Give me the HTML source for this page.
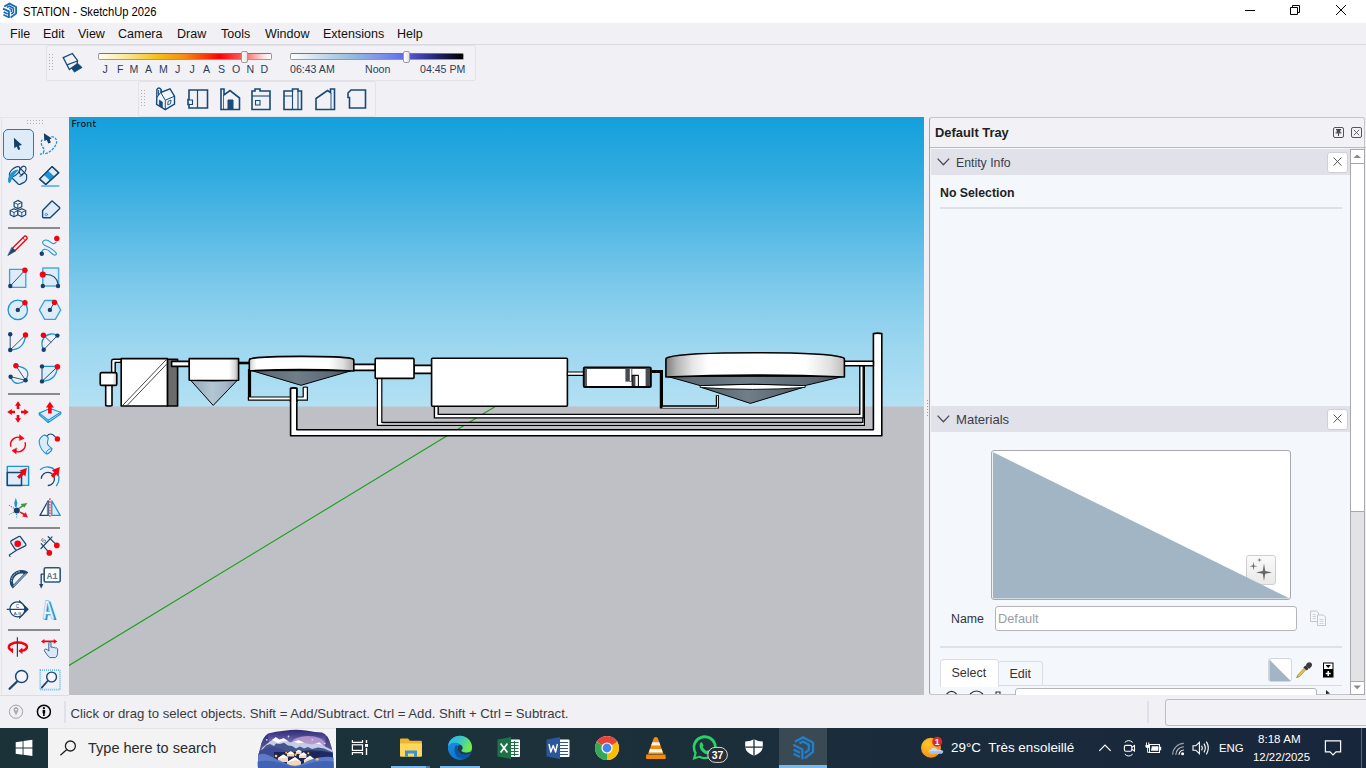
<!DOCTYPE html>
<html><head><meta charset="utf-8"><title>STATION - SketchUp 2026</title>
<style>
*{box-sizing:border-box;margin:0;padding:0}
html,body{width:1366px;height:768px;overflow:hidden;background:#f0f0f5;font-family:"Liberation Sans","DejaVu Sans",sans-serif;font-size:13px;color:#000}
.abs,.abs>*{position:absolute}
svg{position:absolute;overflow:visible}
#title{left:0;top:0;width:1366px;height:23px;background:#fff}
#title .t{left:23px;top:4px;font-size:12.8px;color:#000;white-space:nowrap;line-height:16px;transform:scaleX(0.876);transform-origin:0 0}
#menu{left:0;top:23px;width:1366px;height:21px;background:#f0f0f5}
#menu span{top:3px;font-size:12.5px;white-space:nowrap;line-height:16px;color:#111}
#tb{left:0;top:44px;width:1366px;height:73px;background:#f0f0f5;border-top:1px solid #dadae0}
.tbox{border:1px solid #e2e2e8;border-radius:2px;background:#f1f1f6}
.grip{width:5px;background-image:radial-gradient(circle,#b8b8c0 0.6px,transparent 0.9px);background-size:3px 3px}
.lbl{font-size:10.6px;color:#2f3c58;line-height:12px;white-space:nowrap}
#vp{left:69px;top:117px;width:855px;height:579px;overflow:hidden;background:#bfc0c6}
#sky{left:0;top:0;width:855px;height:290px;border-bottom:1px solid #b9cfdc;background:linear-gradient(#14a0dc 0%,#30abdf 20%,#58bae5 40%,#7fcaeb 60%,#9dd7f0 80%,#b3e0f3 100%)}
#lt{left:0;top:117px;width:69px;height:578px;background:#f0f0f5}
#tray{left:929px;top:117px;width:436px;height:578px;background:#f1f1f6;border:1px solid #c4c4ca;border-left-color:#a4a4aa;border-radius:3px}
.phead{background:#e1e1e9;height:26px}
.phead span{left:25px;top:6px;font-size:12.3px;color:#3c3c48;line-height:16px;white-space:nowrap}
.xbtn{width:21px;height:21px;background:#fff;border:1px solid #cfcfd6;border-radius:3px}
#status{left:0;top:695px;width:1366px;height:33px;background:#f0f0f5}
#taskbar{left:0;top:728px;width:1366px;height:40px;background:linear-gradient(90deg,#1b3239 0%,#1c313a 40%,#1a2c3b 65%,#18263c 100%);color:#fff}
</style></head><body>
<!-- TITLE BAR -->
<div id="title" class="abs">
<svg style="left:0;top:0" width="22" height="23" viewBox="0 0 22 23" fill="none" stroke="#1a6db0" stroke-width="1.800" stroke-linejoin="miter">
<path d="M4.200 6.500 L9.500 3.600 L16.100 7 L16.100 13.500 L10.600 17.500"/>
<path d="M6.800 7.300 L9.500 6.200 L13.400 8.300 L13.400 12.300 L11.200 14" stroke-width="1.600"/>
<path d="M9.300 8.300 L11.300 9.500 L11.300 12" stroke-width="1.400"/>
<path d="M3 8.600 L8.900 11.400 L8.900 18" stroke-width="1.900"/>
<path d="M3.600 12 L7.700 14" stroke-width="1.700"/>
<path d="M3.400 14.700 L8.200 17" stroke-width="1.700"/>
</svg>
<span class="t">STATION - SketchUp 2026</span>
<svg style="left:1226px;top:0" width="140" height="23" viewBox="1226 0 140 23" fill="none" stroke="#000" stroke-width="1">
<path d="M1245 10.5 H1255"/>
<path d="M1290.5 7.5 H1297.5 V14.5 H1290.5 Z"/><path d="M1292.5 7.5 V5.5 H1299.5 V12.5 H1297.5"/>
<path d="M1336 5 L1346 15 M1346 5 L1336 15"/>
</svg>
</div>
<!-- MENU -->
<div id="menu" class="abs">
<span style="left:10px">File</span><span style="left:43px">Edit</span><span style="left:78px">View</span><span style="left:118px">Camera</span><span style="left:177px">Draw</span><span style="left:221px">Tools</span><span style="left:265px">Window</span><span style="left:323px">Extensions</span><span style="left:397px">Help</span>
</div>
<!-- TOOLBARS -->
<div id="tb" class="abs"></div>
<div class="abs tbox" style="left:46px;top:45px;width:430px;height:36px"></div>
<div class="abs tbox" style="left:138px;top:81px;width:238px;height:36px"></div>
<div class="abs" style="left:98px;top:53px;width:174px;height:7px;border:1px solid #9a9a9a;border-top-color:#777;border-radius:2px;background:linear-gradient(90deg,#fffef0 0%,#fbe7a0 15%,#f5c21c 33%,#f58a10 50%,#f83a08 62%,#fe0000 70%,#fb6a6a 85%,#fde4e4 96%,#fff 100%)"></div>
<div class="abs" style="left:241px;top:51px;width:7px;height:12px;border:1px solid #9c9c9c;border-radius:2px;background:linear-gradient(90deg,#fff,#e4e4e4)"></div>
<div class="abs" style="left:290px;top:53px;width:174px;height:7px;border:1px solid #9a9a9a;border-top-color:#777;border-radius:2px;background:linear-gradient(90deg,#fff 0%,#cfe0ee 15%,#9cc0de 33%,#7f98e8 50%,#6a78f2 62%,#4a4cc0 72%,#23236e 85%,#0a0a20 95%,#000 100%)"></div>
<div class="abs" style="left:403px;top:51px;width:7px;height:12px;border:1px solid #9c9c9c;border-radius:2px;background:linear-gradient(90deg,#fff,#e4e4e4)"></div>
<div class="abs" id="months">
<span class="lbl" style="left:102.5px;top:63px">J</span><span class="lbl" style="left:117px;top:63px">F</span><span class="lbl" style="left:129.5px;top:63px">M</span><span class="lbl" style="left:145px;top:63px">A</span><span class="lbl" style="left:159px;top:63px">M</span><span class="lbl" style="left:175px;top:63px">J</span><span class="lbl" style="left:189.5px;top:63px">J</span><span class="lbl" style="left:203px;top:63px">A</span><span class="lbl" style="left:218px;top:63px">S</span><span class="lbl" style="left:232px;top:63px">O</span><span class="lbl" style="left:246.5px;top:63px">N</span><span class="lbl" style="left:260.5px;top:63px">D</span>
<span class="lbl" style="left:290px;top:63px">06:43 AM</span><span class="lbl" style="left:365px;top:63px">Noon</span><span class="lbl" style="left:420px;top:63px">04:45 PM</span>
</div>
<svg style="left:0;top:44px" width="480" height="73" viewBox="0 44 480 73" fill="none" stroke="#174a7a" stroke-width="1.6" stroke-linejoin="miter">
<g fill="#b0b0b4" stroke="none"><rect x="49" y="54" width="1" height="1"/><rect x="49" y="57" width="1" height="1"/><rect x="49" y="60" width="1" height="1"/><rect x="49" y="63" width="1" height="1"/><rect x="49" y="66" width="1" height="1"/><rect x="49" y="69" width="1" height="1"/><rect x="52" y="54" width="1" height="1"/><rect x="52" y="57" width="1" height="1"/><rect x="52" y="60" width="1" height="1"/><rect x="52" y="63" width="1" height="1"/><rect x="52" y="66" width="1" height="1"/><rect x="52" y="69" width="1" height="1"/><rect x="141" y="90" width="1" height="1"/><rect x="141" y="93" width="1" height="1"/><rect x="141" y="96" width="1" height="1"/><rect x="141" y="99" width="1" height="1"/><rect x="141" y="102" width="1" height="1"/><rect x="141" y="105" width="1" height="1"/><rect x="144" y="90" width="1" height="1"/><rect x="144" y="93" width="1" height="1"/><rect x="144" y="96" width="1" height="1"/><rect x="144" y="99" width="1" height="1"/><rect x="144" y="102" width="1" height="1"/><rect x="144" y="105" width="1" height="1"/></g>
<!-- shadow icon -->
<g stroke-width="1.3"><path d="M71.5 68.1 L77.4 63.2 L82.1 67.5 L74.4 72.1 Z" fill="#0f4775" stroke="#0f4775" stroke-width="0.8"/><path d="M63.2 57.6 L72.4 53.5 L77.6 60.7 L77 64 L69.4 69.5 Z" fill="#f1f1f6"/><path d="M67 64.8 L77.4 61"/></g>
<!-- iso house -->
<g stroke-width="1.4"><path d="M156.8 97.3 L156.6 104.4 L165.3 109.6 L174.5 104 L174.5 96.2 L170 88.9 L161.4 92.2 L161 89.4 Q158.9 86.6 156.9 89.4 Z" fill="#f3f5fa"/><path d="M165.3 109.6 L165.3 100.2 L160.6 92.4 L157 97.4 M165.3 100.2 L174.5 96.2 M161 89.4 V92.6 M158.6 90 V95" stroke-width="1"/><path d="M159.400 100.200 L162.300 101.900 L162.300 107.400 L159.400 105.600 Z" fill="#174a7a" stroke-width="0.800"/><path d="M168 101.400 L171 100 L170.600 103.600 L167.800 105 Z" stroke-width="0.900"/></g>
<!-- top -->
<path d="M189 90 H207.5 V108 H189 V104.5 H188 V99.5 H189 Z"/><path d="M197.5 90 V108" stroke-width="1.2"/><path d="M189 100 H192.5 V104.5 H189" stroke-width="1.1"/>
<!-- front -->
<path d="M221 109.5 V89 H224 V95 L230 90.5 L239.5 98 V109.5 Z"/><path d="M228 109.5 V100 H233 V109.5 Z" fill="#1b4b7a" stroke-width="1"/><path d="M223.5 95 V109" stroke-width="0.8"/>
<!-- right -->
<path d="M252 109.5 V91 H255 V89 H260 V91 H270 V109.5 Z"/><path d="M252 96 H270" stroke-width="1.1"/><path d="M255.5 100.5 H260 V105 H255.5 Z" stroke-width="1.1"/>
<!-- back -->
<path d="M284 109.5 V91 H292.5 V89 H298 V91 H301.5 V109.5 Z"/><path d="M284 96 H292.5 M292.5 91 V109.5 M298 91 V109.5" stroke-width="1.1"/>
<!-- left -->
<path d="M316 109.5 V98.5 L327.5 90.5 L330.5 92.5 V89 H334.5 V109.5 Z"/><path d="M331 93 V109.5" stroke-width="0.9"/>
<!-- bottom -->
<path d="M348 93 L351 90 H365.5 V108 H349.5 V97.5 H348 Z"/>
</svg>
<!-- LEFT TOOLBAR -->
<div id="lt" class="abs"></div>
<svg style="left:0;top:117px" width="69" height="578" viewBox="0 117 69 578" fill="none" stroke-linecap="round" stroke-linejoin="round">
<g fill="#b0b0b4" stroke="none"><rect x="27" y="120" width="1" height="1"/><rect x="27" y="123" width="1" height="1"/><rect x="30" y="120" width="1" height="1"/><rect x="30" y="123" width="1" height="1"/><rect x="33" y="120" width="1" height="1"/><rect x="33" y="123" width="1" height="1"/><rect x="36" y="120" width="1" height="1"/><rect x="36" y="123" width="1" height="1"/><rect x="39" y="120" width="1" height="1"/><rect x="39" y="123" width="1" height="1"/><rect x="42" y="120" width="1" height="1"/><rect x="42" y="123" width="1" height="1"/></g>
<path d="M0 117.500 H69 M1.500 118 V695" stroke="#e4e4ec" stroke-width="1"/>
<!-- separators -->
<g stroke="#8a8a8a" stroke-width="2" stroke-linecap="butt"><path d="M8 228 H60"/><path d="M8 394 H60"/><path d="M8 528 H60"/><path d="M8 630 H60"/></g>
<!-- select -->
<rect x="3.5" y="129.5" width="30" height="30" rx="4.5" fill="#deebf8" stroke="#217cc2" stroke-width="1"/>
<path d="M13.900 137.700 L14.300 148.200 L16.700 146.500 L18.200 150.100 L20.300 149.200 L18.900 145.700 L22 145 Z" fill="#153e6a"/>
<!-- lasso -->
<path d="M51.400 136.600 C55 136.600 57 139.600 56.600 142.500 C56 146.500 51 151.500 47 153.200 C45.500 153.800 44 153.800 43.400 153.300 M42.300 139.600 C40.600 141.500 41 145 43 147.500 C44.600 149.600 44.200 152 42.600 153 C41.800 153.700 40.800 154.200 39.900 154.400" stroke="#1c95d8" stroke-width="1.300" stroke-dasharray="2.600 1.200" stroke-linecap="butt"/>
<path d="M43.900 133.200 L44.300 141 L46.900 140.100 L48.200 143.600 L50.900 142.600 L49.700 139.400 L51.600 138.300 Z" fill="#153e6a"/>
<!-- paint bucket -->
<path d="M19.100 167.200 L26.600 174.900 L26.600 178.900 Q26.400 181 24 182.400 L20 184.400 Q19 184.700 18.200 184 L11 177 Z" fill="#deebf8" stroke="#1b4670" stroke-width="1.200"/>
<ellipse cx="14.600" cy="171.800" rx="6.700" ry="3.300" transform="rotate(-44 14.600 171.800)" fill="#f4f8fd" stroke="#1b4670" stroke-width="1.200"/>
<path d="M17.800 169.400 C13.600 169.600 9.600 173 8.400 177.600 C7.600 180.400 8 183 9.400 183.200 C10.800 183 11.200 180.800 12.200 178.600 C13.600 175.400 16.200 172.400 18.400 170.200 Z" fill="#1c95d8"/>
<ellipse cx="22.700" cy="170.400" rx="2.700" ry="4.500" transform="rotate(28 22.700 170.400)" stroke="#1b4670" stroke-width="1.100"/>
<path d="M19.800 176.300 Q22.400 175.800 22.900 173.400" stroke="#1b4670" stroke-width="1.100"/>
<!-- eraser -->
<path d="M39.5 179.1 L52 166.6 L58.7 172.7 L45.8 184.5 Z" fill="#deebf8" stroke="#1b4670" stroke-width="1.3"/>
<path d="M43.9 174.9 L48 170.8 L54.5 176.6 L50.1 180.6 Z" fill="#1c95d8"/>
<path d="M39.5 179.1 L52 166.6 L58.7 172.7 L45.8 184.5 Z" stroke="#1b4670" stroke-width="1.3"/>
<path d="M41.2 186 H59.4" stroke="#6cc0ea" stroke-width="2" stroke-linecap="butt"/>
<!-- components -->
<g stroke="#1b4670" stroke-width="1.2" fill="#f1f5fb">
<path d="M17.8 200.4 L21.8 202.5 L21.8 206.7 L17.8 208.6 L14.1 206.7 L14.1 202.5 Z"/><path d="M14.1 202.5 L17.8 204.4 L21.8 202.5 M17.8 204.4 V208.6" stroke-width="0.9"/>
<path d="M14 208.7 L17.9 210.6 L17.9 214.7 L14 216.7 L10.2 214.7 L10.2 210.6 Z"/><path d="M10.2 210.6 L14 212.5 L17.9 210.6 M14 212.5 V216.7" stroke-width="0.9"/>
<path d="M21.8 208.7 L25.7 210.6 L25.7 214.7 L21.8 216.7 L17.9 214.7 L17.9 210.6 Z"/><path d="M17.9 210.6 L21.8 212.5 L25.7 210.6 M21.8 212.5 V216.7" stroke-width="0.9"/>
</g>
<!-- tag -->
<path d="M42.6 210.6 L51.6 201.3 Q52.2 200.8 52.8 201.4 L59.6 207.6 Q60 208.2 59.5 208.8 L50.2 217.8 L43.6 217.8 Q42.6 217.7 42.6 216.8 Z" fill="#deebf8" stroke="#1b4670" stroke-width="1.4"/>
<circle cx="46.3" cy="214.5" r="1.2" stroke="#1c95d8" stroke-width="0.9"/>
<!-- pencil -->
<path d="M12.4 248.3 L24.5 236.2 Q25.6 235.6 26.4 236.6 L27 237.4 Q27.6 238.2 26.8 239 L14.9 250.7 Z" fill="#fff" stroke="#f8000f" stroke-width="1.4"/>
<path d="M22.8 238 L25.2 240.5" stroke="#f8000f" stroke-width="1"/>
<path d="M12 247.9 L15.3 251.1 L8.2 255.3 Z" fill="#1b4670" stroke="#1b4670" stroke-width="0.8"/>
<!-- freehand -->
<path d="M56.2 242.2 C54.5 244 52.5 244 50.5 242.2 C48 240 45.5 239.6 43.8 240.6 C42 241.8 42.3 244.2 44.6 245.2 C47.5 246.4 50 247.6 52.6 249.6 C55.6 251.8 57 253.4 56 254.6 C54.8 255.8 52.8 254.6 51 252.6 C49 250.4 46.6 249 44.4 249.3 C42.8 249.6 42 250.6 41.8 252" stroke="#1c95d8" stroke-width="1.1"/>
<circle cx="56.8" cy="238.5" r="2.7" fill="#f8000f"/><circle cx="41.8" cy="253.7" r="2.2" fill="#173f6b"/>
<!-- rectangle -->
<rect x="9.6" y="269.4" width="16.2" height="18" fill="#deebf8" stroke="#35a2dd" stroke-width="1.3"/>
<path d="M10.3 286 L24.9 270.3" stroke="#1b4670" stroke-width="0.9"/>
<circle cx="24.9" cy="270.3" r="2.7" fill="#f8000f"/><circle cx="10.3" cy="286" r="2.2" fill="#173f6b"/>
<!-- rotated rect -->
<rect x="42.8" y="267.9" width="15.8" height="18.2" fill="#deebf8" stroke="#49ade2" stroke-width="1.5"/>
<path d="M45.5 274.5 Q56.5 274.5 58 284" stroke="#1b4670" stroke-width="1.1"/>
<circle cx="42.8" cy="274.5" r="3.1" fill="#f8000f"/><circle cx="42.8" cy="286" r="2.2" fill="#173f6b"/><circle cx="58" cy="286" r="2.2" fill="#173f6b"/>
<!-- circle -->
<circle cx="17.8" cy="309.9" r="9.7" fill="#deebf8" stroke="#1c95d8" stroke-width="1.3"/>
<path d="M17.8 309.9 L24.9 302.8" stroke="#1b4670" stroke-width="0.9"/>
<circle cx="17.8" cy="309.9" r="2.2" fill="#173f6b"/><circle cx="24.9" cy="302.8" r="2.7" fill="#f8000f"/>
<!-- polygon -->
<path d="M39.4 309.9 L44.7 300.5 L55.3 300.5 L60.7 309.9 L55.3 319.4 L44.7 319.4 Z" fill="#deebf8" stroke="#35a2dd" stroke-width="1.3"/>
<path d="M49.9 309.9 L54.5 302.4" stroke="#1b4670" stroke-width="0.9"/>
<circle cx="49.9" cy="309.9" r="2.2" fill="#173f6b"/><circle cx="54.5" cy="302.4" r="2.7" fill="#f8000f"/>
<!-- arc -->
<path d="M10.2 350 Q24.5 349.5 25.5 335" stroke="#1c95d8" stroke-width="1.3"/>
<path d="M10.2 334.3 V350 L25.5 335" stroke="#1b4670" stroke-width="0.9"/>
<circle cx="10.2" cy="334.3" r="2.2" fill="#173f6b"/><circle cx="10.2" cy="350" r="2.2" fill="#173f6b"/><circle cx="25.5" cy="335" r="2.7" fill="#f8000f"/>
<!-- 2pt arc -->
<path d="M43.7 349.7 A10 10 0 0 1 57.4 335.6" stroke="#1c95d8" stroke-width="1.3"/>
<path d="M43.7 349.7 L57.4 335.6 M43.4 335.2 L51 342.3" stroke="#1b4670" stroke-width="0.9"/>
<circle cx="43.4" cy="335.2" r="2.7" fill="#f8000f"/><circle cx="57.4" cy="335.6" r="2.2" fill="#173f6b"/><circle cx="43.7" cy="349.7" r="2.2" fill="#173f6b"/>
<!-- 3pt arc -->
<path d="M15.9 365.8 Q33 368 25.6 380.3 M10.6 376.7 Q15 388 25.6 380.3" stroke="#1c95d8" stroke-width="1.3"/>
<path d="M15.9 365.8 L25.6 380.3 L10.6 376.7" stroke="#1b4670" stroke-width="0.9"/>
<circle cx="15.9" cy="365.8" r="2.7" fill="#f8000f"/><circle cx="10.6" cy="376.7" r="2.2" fill="#173f6b"/><circle cx="25.6" cy="380.3" r="2.2" fill="#173f6b"/>
<!-- pie -->
<path d="M42 366.4 H57.4 Q56.5 380.5 42 381.4 Z" fill="#deebf8"/>
<path d="M42 366.4 H57.4 M57.4 366.8 Q56.5 380.5 42 381.4" stroke="#1c95d8" stroke-width="1.3"/>
<path d="M42 366.4 V381.4 L57.4 366.8" stroke="#1b4670" stroke-width="1"/>
<circle cx="42" cy="366.4" r="2.2" fill="#173f6b"/><circle cx="42" cy="381.4" r="2.2" fill="#173f6b"/><circle cx="57.4" cy="366.8" r="2.8" fill="#f8000f"/>
<!-- move -->
<g fill="#f8000f" stroke="none">
<path d="M18 401.2 L21 405.8 H19.3 V409 H16.7 V405.8 H15 Z"/><path d="M18 422.8 L21 418.2 H19.3 V415 H16.7 V418.2 H15 Z"/>
<path d="M7.2 412 L11.8 409 V410.7 H15 V413.3 H11.8 V415 Z"/><path d="M28.8 412 L24.2 409 V410.7 H21 V413.3 H24.2 V415 Z"/>
</g>
<!-- push pull -->
<path d="M39.3 413.1 L49.9 408.5 L60.7 412.2 L60.7 413.9 L48.2 422.5 L39.3 414.8 Z" fill="#deebf8" stroke="#1c95d8" stroke-width="1.2"/>
<path d="M39.3 413.1 L48.2 420.3 L60.7 412.2 M48.2 420.3 V422.5" stroke="#1c95d8" stroke-width="1.1"/>
<path d="M49.9 401.8 L53.9 407.4 H51.7 V413.4 H48.1 V407.4 H45.9 Z" fill="#f8000f"/>
<!-- rotate -->
<path d="M10.8 446.2 A7.4 7.4 0 0 1 21 437.8 M25.2 442.8 A7.4 7.4 0 0 1 15 451.2" stroke="#f8000f" stroke-width="1.4"/>
<path d="M19.8 435 L24.2 438.4 L19.6 440.3 Z M16.4 448.3 L12 450.6 L15.9 453.6 Z" fill="#f8000f" stroke="#f8000f" stroke-width="0.6"/>
<!-- follow me -->
<path d="M47 436 Q50.5 431.5 55.3 436.8" stroke="#1b4670" stroke-width="1.1"/>
<path d="M43.7 435.2 C40.5 437 38.8 440 39.3 443 C40 447.5 43 451.5 46.2 453.9 C48 454.2 51.5 451.5 52 448.5 C49 446.5 47 444.5 47.4 442.7 C47.6 441 48 439.5 48.3 438.1 C47.5 436.3 45.5 435 43.7 435.2 Z" fill="#deebf8" stroke="#1c95d8" stroke-width="1.1"/>
<ellipse cx="49" cy="451.2" rx="3.4" ry="1.6" transform="rotate(-40 49 451.2)" stroke="#1c95d8" stroke-width="0.9"/>
<circle cx="57.4" cy="438.9" r="2.7" fill="#f8000f"/>
<!-- scale -->
<rect x="7.3" y="466.4" width="21.3" height="19" fill="#deebf8" stroke="#1c95d8" stroke-width="1.4"/>
<path d="M7.3 472.6 H21.5 V485.4 H7.3 Z" stroke="#1b4670" stroke-width="1.5"/>
<path d="M26.8 467.9 L19.6 470.6 L21.8 472.6 L17 476.6 L19.3 479 L23.6 474.6 L25.4 476.6 Z" fill="#f8000f"/>
<!-- offset -->
<path d="M40.4 469.4 A11.5 11.5 0 0 1 56.5 485.6" stroke="#1c95d8" stroke-width="1.3"/>
<path d="M41.3 478.3 A6.6 6.6 0 1 1 48.3 485.5" stroke="#1b4670" stroke-width="1.3"/>
<path d="M59.9 467.1 L51.8 470.2 L54.2 472.3 L50.8 475.6 L53.2 478 L56.4 474.6 L58.2 476.4 Z" fill="#f8000f"/>
<!-- axes -->
<path d="M15.8 497.8 L17.4 503 L16.6 507 H15 L14.2 503 Z" fill="#1c95d8"/>
<path d="M27.4 502.9 L24.4 507.6 L23 506.4 L19.5 509 L18.6 508 L21.8 505.2 L20.6 504 Z" fill="#3c9a3c"/>
<path d="M27.8 517.5 L22.2 516.4 L23.4 515 L19.5 512.6 L20.4 511.6 L24.6 513.6 L25.8 512.2 Z" fill="#f01020"/>
<path d="M13.8 508.2 L9 505.2" stroke="#f01020" stroke-width="1.1" stroke-dasharray="1 1.4" stroke-linecap="butt"/>
<path d="M13.6 512.2 L9 514.8" stroke="#3c9a3c" stroke-width="1.1" stroke-dasharray="1 1.4" stroke-linecap="butt"/>
<path d="M16.6 514 V518.6" stroke="#1c95d8" stroke-width="1.1" stroke-dasharray="1 1.4" stroke-linecap="butt"/>
<circle cx="16.8" cy="510.4" r="3" fill="#173f6b"/>
<!-- flip -->
<path d="M40 515.4 L48.2 500.8 V515.4 Z" fill="#fff" stroke="#1b4670" stroke-width="1.3"/>
<path d="M47.6 502 V515" stroke="#6d8aa8" stroke-width="1.6" stroke-linecap="butt"/>
<path d="M51.8 500.8 L60.2 515.4 H51.8 Z" fill="#deebf8" stroke="#1c95d8" stroke-width="1.3"/>
<path d="M49.9 498.2 V516.8" stroke="#ff6068" stroke-width="1.8" stroke-dasharray="2 0.8" stroke-linecap="butt"/>
<!-- tape -->
<path d="M16.2 550.4 L9.3 555 L10 556.4" stroke="#1b4670" stroke-width="1.2"/>
<path d="M11.4 540.6 L18.8 536.5 Q20 536 20.7 537.2 L25.8 544.2 Q26.3 545.2 25.3 545.8 L17.2 550 Q16 550.4 15.2 549.4 L11 543 Q10.3 541.6 11.4 540.6 Z" fill="#deebf8" stroke="#1b4670" stroke-width="1.3"/>
<circle cx="17.7" cy="543.7" r="3.3" fill="#f8000f"/>
<!-- dimension -->
<path d="M41 548.500 L52 536.900 M41.200 543.700 L47.600 550.800 M48.200 536.700 L55 543.400" stroke="#1b4670" stroke-width="1.200"/>
<circle cx="49.300" cy="552.900" r="2.800" fill="#f8000f"/><circle cx="56.800" cy="545.400" r="2.800" fill="#f8000f"/>
<text x="0" y="0" font-family="Liberation Sans,sans-serif" font-size="7" fill="#556" stroke="none" transform="translate(45.400 542.400) rotate(-46)" text-anchor="middle">5</text>
<!-- protractor -->
<path d="M12.8 587.5 L27.4 572.5 C24 569.6 17 570 13 574.4 C9.4 578.4 9.4 584 12.8 587.5 Z" fill="#1b4670" stroke="#1b4670" stroke-width="1.2"/>
<path d="M13.6 584.4 L23.8 574 C21 572.8 17.4 573.8 15 576.4 C12.6 579 12.4 582 13.6 584.4 Z" fill="#f0f0f5" stroke="none"/>
<path d="M13.6 586 L26 573.4" stroke="#f0f0f5" stroke-width="0.9" stroke-dasharray="1.2 0.8"/>
<path d="M11.4 581 C11.4 577 14.5 572.6 20 571.6" stroke="#dfe8f2" stroke-width="0.8" stroke-dasharray="0.7 1.8"/>
<!-- text label -->
<path d="M44 574.2 H41.2 V585" stroke="#1b4670" stroke-width="1.3" stroke-linecap="butt"/>
<path d="M39.1 584 H43.3 L41.2 588.8 Z" fill="#1b4670"/>
<rect x="44.2" y="567.8" width="16" height="14.2" rx="1.5" fill="#fff" stroke="#2a5580" stroke-width="1.6"/>
<text x="52.3" y="578.6" font-family="Liberation Mono,monospace" font-size="8.5" font-weight="bold" fill="#5a7896" stroke="none" text-anchor="middle" textLength="11" lengthAdjust="spacingAndGlyphs">A1</text>
<!-- section -->
<path d="M19.1 599.7 L28.8 609.3 L19.1 619.3 Z" fill="#173f6b"/>
<circle cx="17.4" cy="609.3" r="7.5" fill="#fff" stroke="#1b4670" stroke-width="1.3"/>
<path d="M7.2 609.3 H27" stroke="#1b4670" stroke-width="1.3"/>
<text x="17.4" y="607.6" font-family="Liberation Sans,sans-serif" font-size="4.800" fill="#1b4670" stroke="none" text-anchor="middle">C</text>
<text x="17.4" y="615.2" font-family="Liberation Sans,sans-serif" font-size="4.400" fill="#1b4670" stroke="none" text-anchor="middle">A-B</text>
<!-- 3d text -->
<text x="0" y="0" font-family="Liberation Sans,sans-serif" font-size="27" font-weight="bold" fill="#1c95d8" stroke="none" text-anchor="middle" transform="translate(50.4 619.6) scale(0.66 1) skewX(8)">A</text>
<text x="0" y="0" font-family="Liberation Sans,sans-serif" font-size="27" font-weight="bold" fill="#eaf3fb" stroke="#49ade2" stroke-width="0.6" text-anchor="middle" transform="translate(48.6 618.8) scale(0.62 1) skewX(8)">A</text>
<!-- orbit -->
<path d="M13 650.700 A9 4.300 0 0 1 8.900 646.800 A9 4.300 0 0 1 26.900 646.800 A9 4.300 0 0 1 21.600 650.900" stroke="#f8000f" stroke-width="2.500" stroke-linecap="butt"/>
<path d="M22.400 647.400 L22.400 654 L18.300 650.900 Z M13 648 L13 653.600 L9.600 650 Z" fill="#f8000f"/>
<path d="M17.400 637.300 V656.800" stroke="#1b4670" stroke-width="1.200" stroke-linecap="butt"/>
<!-- pan -->
<path d="M41 641.4 L44.4 639 V640.6 H53.8 V639 L57.2 641.4 L53.8 643.8 V642.2 H44.4 V643.8 Z" fill="#f8000f"/>
<path d="M48.8 650.6 V642.6 Q49.9 641.2 51 642.6 V647.4 Q52.2 646.4 53.2 647.6 Q54.4 646.8 55.3 648 Q56.8 647.4 57.6 648.8 V653.4 Q57.4 656.4 55.4 657.6 H49.6 Q47.4 655.6 44.4 650.8 Q44 649.2 45.6 649 Q47 649.4 48.8 650.6 Z" fill="#dbe8f5" stroke="#3a6a94" stroke-width="1"/>
<!-- zoom -->
<path d="M16.8 681.8 L9.6 688.8" stroke="#1b4670" stroke-width="2.3"/>
<circle cx="21.6" cy="676.5" r="6" fill="#f4f6fb" stroke="#1b4670" stroke-width="1.5"/>
<!-- zoom window -->
<rect x="40.2" y="670.2" width="19.8" height="19.4" stroke="#49ade2" stroke-width="1.8" stroke-dasharray="0.8 1.2" stroke-linecap="butt"/>
<path d="M47.6 681 L41.8 687.6" stroke="#1b4670" stroke-width="1.8"/>
<circle cx="51.6" cy="677" r="4.9" fill="#f4f6fb" stroke="#1b4670" stroke-width="1.4"/>
</svg>
<!-- VIEWPORT -->
<div id="vp" class="abs"><div id="sky"></div>
<span style="left:2.6px;top:0.5px;font-family:'DejaVu Sans','Liberation Sans',sans-serif;font-size:9.2px;letter-spacing:0.3px;line-height:12px;color:#000">Front</span>
<svg style="left:0;top:0" width="855" height="578" viewBox="69 117 855 578" fill="none">
<defs>
<linearGradient id="cyl" x1="0" x2="1"><stop offset="0" stop-color="#b9b9b9"/><stop offset="0.05" stop-color="#e6e6e6"/><stop offset="0.18" stop-color="#fff"/><stop offset="0.72" stop-color="#fff"/><stop offset="0.9" stop-color="#d9d9d9"/><stop offset="1" stop-color="#8e8e8e"/></linearGradient>
<linearGradient id="cyl2" x1="0" x2="1"><stop offset="0" stop-color="#7c7c7c"/><stop offset="0.060" stop-color="#b4b4b4"/><stop offset="0.150" stop-color="#e6e6e6"/><stop offset="0.240" stop-color="#fff"/><stop offset="0.780" stop-color="#fff"/><stop offset="0.920" stop-color="#e0e0e0"/><stop offset="1" stop-color="#bcbcbc"/></linearGradient><linearGradient id="cyl3" x1="0" x2="1"><stop offset="0" stop-color="#cfcfcf"/><stop offset="0.070" stop-color="#fff"/><stop offset="0.760" stop-color="#fff"/><stop offset="0.900" stop-color="#dedede"/><stop offset="1" stop-color="#a6a6a6"/></linearGradient>
<linearGradient id="coneL" x1="0" x2="1"><stop offset="0" stop-color="#8ea5b8"/><stop offset="0.45" stop-color="#b4c6d3"/><stop offset="0.75" stop-color="#a3b8c8"/><stop offset="1" stop-color="#7e95a8"/></linearGradient>
<linearGradient id="coneD" x1="0" x2="1"><stop offset="0" stop-color="#54626d"/><stop offset="0.45" stop-color="#6f7e89"/><stop offset="0.8" stop-color="#5c6a75"/><stop offset="1" stop-color="#47535d"/></linearGradient>
<linearGradient id="cylR" x1="0" x2="1"><stop offset="0" stop-color="#f2f2f2"/><stop offset="0.060" stop-color="#fff"/><stop offset="0.800" stop-color="#fff"/><stop offset="0.920" stop-color="#dcdcdc"/><stop offset="1" stop-color="#a2a2a2"/></linearGradient>
</defs>
<!-- green axis -->
<path d="M495.300 406.500 L69 665.500" stroke="#17a117" stroke-width="1.100"/>
<g stroke="#000" stroke-width="1.6" stroke-linejoin="round">
<!-- outer pipe -->
<path d="M290.6 388.4 H296.8 V429.8 H873.4 V333.6 Q877.6 332.6 881.8 333.6 V435.8 H290.6 Z" fill="#fff"/>
<!-- pipe from small box -->
<path d="M377.400 378 H381.800 V422.400 H862.800 V365.600 H864.400 V425.400 H377.400 Z" fill="#fff" stroke-width="1.200"/><path d="M382.400 423.900 H862" stroke="#b4b5ba" stroke-width="1.900"/>
<!-- pipe from big box -->
<path d="M434.400 406 H438.200 V414.400 H859.800 V365.600 H863.200 V417.900 H434.400 Z" fill="#fff" stroke-width="1.400"/>
<!-- right connector -->
<path d="M844 361.2 H873.4 V365.8 H844 Z" fill="#fff"/>
<!-- pump -->
<path d="M105.700 385 H112 V405.400 Q108.800 406.600 105.700 405.400 Z" fill="#fff"/>
<path d="M111.600 373 V360.800 Q111.800 359.200 113.600 359.200 H121.400 V362.400 H115.200 V373 Z" fill="#fff" stroke-width="1.400"/>
<rect x="100.2" y="372.6" width="16.6" height="12.8" rx="1.5" fill="url(#cyl)"/>
<!-- box with dark side -->
<path d="M167.4 359.2 H177.6 V406 H167.4 Z" fill="#6c6c6c"/>
<path d="M121.2 358.6 H167.4 V406 H121.2 Z" fill="#fff"/>
<path d="M122.400 405.700 L166.500 359.400 M126.900 405.700 L166.800 364" stroke="#333" stroke-width="0.900"/>
<!-- pipe box->cone tank -->
<path d="M171.6 361.4 H189.4 V366.4 H171.6 Z" fill="#fff"/>
<!-- cone tank -->
<path d="M190.4 380 L237.6 380 L213.2 405.4 Z" fill="url(#coneL)" stroke-width="1"/>
<path d="M189.200 358.600 H238.600 V380.200 Q213.800 381 189.200 380.200 Z" fill="url(#cylR)"/>
<!-- pipe cone tank -> clarifier -->
<path d="M238.6 363 H249.6" stroke-width="2.6"/>
<!-- clarifier 1 legs -->
<path d="M249.500 369 V398.600" stroke-width="3.200"/><path d="M248.400 397 H303.200 V387.400 Q305.400 386.600 307.400 387.400 V400.200 H248.400 Z" fill="#fff" stroke-width="1.200"/>
<path d="M251.600 370.600 L351.200 370.800 L301 385.300 Z" fill="url(#coneD)" stroke-width="1"/>
<path d="M249.300 360.400 Q249.300 358.800 251.600 358.500 C265 355.700 338 355.700 351.500 358.500 Q353.800 358.800 353.800 360.400 V371 Q301.500 368.400 249.300 370.800 Z" fill="url(#cyl3)"/>
<!-- re-draw outer pipe top over legs -->
<path d="M290.600 402.500 V388.400 Q293.700 387.400 296.800 388.400 V402.500" fill="#fff"/>
<!-- pipe clarifier->small box -->
<path d="M353.8 364.4 H375.4 V370.4 H353.8 Z" fill="#fff"/>
<!-- pipe small box -> big box -->
<path d="M414 365.4 H432 V373.4 H414 Z" fill="#fff"/>
<!-- small box -->
<rect x="375.2" y="358.4" width="38.8" height="20" rx="1" fill="#fff"/>
<!-- big box -->
<rect x="431.6" y="358.2" width="135.8" height="48" rx="1" fill="#fff"/>
<!-- pipe big box -> small tank -->
<path d="M567.400 372 H584 V375.400 H567.400 Z" fill="#fff" stroke-width="1.100"/>
<!-- small tank -->
<rect x="583.900" y="367.700" width="66.800" height="19.300" rx="1" fill="#fff" stroke-width="2.200"/>
<path d="M584.600 368.600 H587 V386 H584.600 Z" fill="#5a5f64" stroke="none"/>
<path d="M645.600 368.600 H650 V386 H645.600 Z" fill="#454c54" stroke="none"/>
<path d="M625.400 368.800 H629.200 V381.600 H625.400 Z" fill="#454c54" stroke="none"/>
<path d="M629.400 368.400 H631.800 V381.400 H629.400 Z" fill="#fff" stroke="#222" stroke-width="0.700"/>
<path d="M632.200 375.600 H635.400 V386 H632.200 Z" fill="#454c54" stroke="none"/>
<path d="M632.200 386 V375.400 H638.400 V386" fill="none" stroke="#111" stroke-width="1.100"/>
<!-- pipe small tank -> big clarifier -->
<path d="M651.600 371.500 H661.400 V406.900 H717.400 V395.200" stroke-width="3.200" fill="none" stroke-linejoin="miter"/><path d="M662.500 407.300 H717.600 V396" stroke="#fff" stroke-width="1" fill="none"/>
<!-- big clarifier -->
<path d="M702 387.600 L802.500 387.600 L750.400 403.400 Z" fill="url(#coneD)" stroke-width="1"/>
<path d="M700.200 385 Q752 383.600 805.200 385 V387.400 Q752 391.400 700.200 387.400 Z" fill="#fff" stroke-width="0.900"/>
<path d="M667.400 376.400 L843.400 376.400 L805 385.600 Q752 382.800 700.200 385.600 Z" fill="url(#coneD)" stroke-width="1"/>
<path d="M665.900 359.400 Q665.900 357.600 668.500 357.200 C690 351.300 820 351.300 841.800 357.200 Q844.400 357.600 844.400 359.400 V377 Q755 373.200 665.900 377 Z" fill="url(#cyl2)"/>
</g>
</svg>
</div>
<!-- splitter -->
<div class="abs" style="left:927px;top:400px;width:1px;height:17px;background-image:linear-gradient(#9a9aa2 1px,transparent 1px);background-size:1px 3px"></div>
<!-- TRAY -->
<div id="tray" class="abs">
<span style="left:5px;top:7px;font-size:12.9px;font-weight:bold;color:#222;line-height:16px;white-space:nowrap">Default Tray</span>
<div style="left:0;top:29px;width:437px;height:1px;background:#b9b9bf"></div>
<div style="left:1px;top:30px;width:420px;height:546px;background:#f4f7fc"></div>
<!-- entity info -->
<div class="phead abs" style="left:1px;top:31px;width:420px"><span>Entity Info</span></div>
<div class="xbtn" style="left:397px;top:34px"></div>
<span style="left:10px;top:67px;font-size:12.3px;font-weight:bold;color:#222;line-height:16px;white-space:nowrap">No Selection</span>
<div style="left:10px;top:89px;width:402px;height:2px;background:#dfe1ea"></div>
<!-- materials -->
<div class="phead abs" style="left:1px;top:288px;width:420px"><span style="font-size:13.1px">Materials</span></div>
<div class="xbtn" style="left:397px;top:291px"></div>
<div style="left:61px;top:332px;width:300px;height:150px;background:#fff;border:1px solid #a9a9ad;border-radius:3px"></div>
<div style="left:316px;top:437px;width:30px;height:30px;border:1px solid #cfcfcf;border-radius:3px;background:linear-gradient(#fafafa,#e9e9e9)"></div>
<span style="left:21px;top:493px;font-size:12.3px;color:#333;line-height:16px">Name</span>
<div style="left:65px;top:488px;width:302px;height:25px;background:#fff;border:1px solid #b4b4ba;border-radius:3px"></div>
<span style="left:68px;top:493px;font-size:12.8px;color:#9c9ca6;line-height:16px">Default</span>
<div style="left:10px;top:528px;width:402px;height:2px;background:#dfe1ea"></div>
<div style="left:10px;top:567px;width:402px;height:1px;background:#d9dbe4"></div>
<div style="left:68px;top:543px;width:45px;height:25px;border:1px solid #dcdde6;border-bottom:none;border-radius:3px 3px 0 0"></div>
<div style="left:10px;top:541px;width:59px;height:28px;background:#fff;border:1px solid #dcdde6;border-bottom:none;border-radius:4px 4px 0 0"></div>
<span style="left:21.5px;top:547px;font-size:12.5px;color:#333;line-height:16px">Select</span>
<span style="left:79.5px;top:548px;font-size:12.5px;color:#333;line-height:16px">Edit</span>
<div style="left:85px;top:570px;width:302px;height:10px;background:#fff;border:1px solid #b4b4ba;border-radius:3px"></div>
<!-- scrollbar -->
<div style="left:420px;top:31px;width:15px;height:546px;background:#e3e3e6;border:1px solid #a8a8ac"></div>
<div style="left:421px;top:32px;width:13px;height:362px;background:#fff;border-bottom:1px solid #a8a8ac"></div>
<div style="left:421px;top:32px;width:13px;height:14px;background:#fff;border-bottom:1px solid #a8a8ac"></div>
<div style="left:421px;top:563px;width:13px;height:13px;background:#fff;border-top:1px solid #a8a8ac"></div>
<svg style="left:0;top:0" width="437" height="578" viewBox="930 118 437 578" fill="none">
<!-- pin & close -->
<rect x="1333.5" y="127.5" width="10" height="10" rx="1.5" stroke="#555" stroke-width="1"/>
<path d="M1336 129.5 H1341 M1337.2 129.5 V132.6 M1339.8 129.5 V132.6 M1335.6 132.9 H1341.4 M1338.5 133 V136" stroke="#444" stroke-width="1"/><rect x="1337.2" y="129.5" width="2.6" height="3.2" fill="#444"/>
<rect x="1351.5" y="127.5" width="10" height="10" rx="1.5" stroke="#555" stroke-width="1"/>
<path d="M1353.8 129.8 L1359.2 135.2 M1359.2 129.8 L1353.8 135.2" stroke="#555" stroke-width="0.9"/>
<!-- chevrons -->
<path d="M937.6 158.6 L943.4 164.8 L949.2 158.6" stroke="#4c4c58" stroke-width="1.300"/>
<path d="M937.6 415.6 L943.4 421.8 L949.2 415.6" stroke="#4c4c58" stroke-width="1.300"/>
<!-- X buttons -->
<path d="M1333.6 157.6 L1341.4 165.6 M1341.4 157.6 L1333.6 165.6" stroke="#555" stroke-width="1"/>
<path d="M1333.6 414.6 L1341.4 422.6 M1341.4 414.6 L1333.6 422.6" stroke="#555" stroke-width="1"/>
<!-- scroll arrows -->
<path d="M1353.4 158 L1357.2 154.4 L1361 158 Z" fill="#8a8a8e"/>
<path d="M1353.4 685.6 L1357.2 689.2 L1361 685.6 Z" fill="#8a8a8e"/>
<!-- material preview -->
<path d="M992.8 452 L1289.6 598.4 H992.8 Z" fill="#a1b5c4"/>
<!-- sparkle -->
<g fill="#666"><path d="M1264 563.6 L1265.2 571 L1272 572.4 L1265.2 573.8 L1264 581 L1262.8 573.8 L1256 572.4 L1262.8 571 Z"/><path d="M1253.4 561.6 L1254 565.6 L1257.6 566.2 L1254 566.8 L1253.4 570.4 L1252.8 566.8 L1249.4 566.2 L1252.8 565.6 Z"/><path d="M1259.4 557.4 L1259.8 559.6 L1262 560 L1259.8 560.4 L1259.4 562.6 L1259 560.4 L1257 560 L1259 559.6 Z"/></g>
<!-- copy icon -->
<g stroke="#c3c6cc" stroke-width="1" fill="#f4f7fc"><path d="M1310.500 611 H1316.500 L1318.500 613 V621.500 H1310.500 Z"/><path d="M1317.500 615 H1323.500 L1325.500 617 V625.500 H1317.500 Z"/><path d="M1319.500 619.500 H1323.500 M1319.500 621.500 H1323.500 M1319.500 623.500 H1323.500 M1312.500 614.500 H1316 M1312.500 616.500 H1316 M1312.500 618.500 H1316" stroke-width="0.7"/></g>
<!-- swatch -->
<rect x="1268.500" y="658.500" width="23" height="23" rx="2.5" fill="#fff" stroke="#d4d6de" stroke-width="1"/>
<path d="M1269.400 659.600 L1290.800 681 H1271 Q1269.400 681 1269.400 679.400 Z" fill="#a1b5c4"/>
<!-- eyedropper -->
<path d="M1297 677.400 L1297.600 675.200 L1305.200 667.200 L1306.800 668.800 L1299.200 676.800 Z" fill="#e9c25a" stroke="#8a6a1a" stroke-width="0.6"/>
<path d="M1296.200 678 L1298 676.200" stroke="#e08a10" stroke-width="1"/>
<path d="M1303.400 667.400 L1306.800 670.600 L1308.600 668.800 L1305.200 665.600 Z" fill="#333"/>
<path d="M1306 666.600 Q1305.600 663.600 1308.200 662.400 Q1311 661.600 1312 664 Q1312.600 666.600 1310 668.200 Q1308 669 1306 666.600 Z" fill="#3a3a3a"/>
<!-- black icon -->
<rect x="1323" y="662.500" width="10.500" height="15" fill="#000"/>
<rect x="1324" y="663.500" width="8.500" height="5.500" fill="#fff"/>
<path d="M1325.600 665 H1330.800 L1328.200 668 Z" fill="#000"/>
<path d="M1328.200 671 V676 M1325.700 673.500 H1330.700" stroke="#fff" stroke-width="1.500"/>
<!-- bottom row partial icons -->
<g stroke="#333" stroke-width="1.100"><path d="M946.600 694 Q951.500 688.800 956.600 694"/><path d="M970 694 Q976.500 688 983 694"/><path d="M996 694 V692 L1000 692 V694" /></g>
<path d="M1326 690 L1330 693.500 L1326 694 Z" fill="#222"/>
</svg>
</div>
<!-- STATUS BAR -->
<div id="status" class="abs">
<div style="left:0;top:0;width:69px;height:1px;background:#dcdce4"></div>
<div style="left:64px;top:6px;width:2px;height:22px;background:#e0e0ea"></div>
<span style="left:70.5px;top:10.5px;font-size:13.17px;color:#3a3a3a;line-height:16px;white-space:nowrap" id="stxt">Click or drag to select objects. Shift = Add/Subtract. Ctrl = Add. Shift + Ctrl = Subtract.</span>
<div style="left:1147px;top:6px;width:2px;height:22px;background:#e0e0ea"></div>
<div style="left:1165px;top:4px;width:204px;height:27px;border:1px solid #bdbdc3;border-radius:3px;background:#f1f1f6"></div>
<svg style="left:0;top:0" width="69" height="33" viewBox="0 695 69 33" fill="none">
<circle cx="16" cy="711.7" r="6.6" stroke="#a0a0a0" stroke-width="1"/>
<path d="M16 715.600 L13.900 711 A2.500 2.500 0 1 1 18.100 711 Z" fill="#a8a8a8"/><circle cx="16" cy="709.700" r="1" fill="#f0f0f5"/>
<circle cx="43.900" cy="711.700" r="6.500" stroke="#000" stroke-width="1.500"/>
<circle cx="43.900" cy="708.200" r="1.100" fill="#000"/><path d="M42.600 710 H45.200 V713.200 H44.700 V716 H43.100 V713.200 H42.600 Z" fill="#000"/>
</svg>
</div>
<!-- TASKBAR -->
<div id="taskbar" class="abs">
<div style="left:48px;top:0;width:288px;height:40px;background:#f3f3f3;border-top:1px solid #e4e4e4"></div>
<span style="left:88px;top:10px;font-size:15.2px;color:#2b2b2b;line-height:20px;white-space:nowrap;transform:scaleX(0.955);transform-origin:0 0" id="srch">Type here to search</span>
<div style="left:779px;top:0;width:48px;height:40px;background:#3a4a54"></div>
<div style="left:779px;top:37px;width:48px;height:3px;background:#76b9ed"></div>
<div style="left:391px;top:38px;width:35px;height:2px;background:#76b9ed"></div><div style="left:426px;top:38px;width:4px;height:2px;background:#4f7c9c"></div>
<div style="left:440px;top:38px;width:40px;height:2px;background:#76b9ed"></div>
<span style="left:951px;top:11px;font-size:13.4px;line-height:18px;white-space:nowrap;color:#fff" id="wx">29°C&nbsp;&nbsp;Très ensoleillé</span>
<span style="left:1219px;top:12px;font-size:11.4px;line-height:16px;color:#fff" id="eng">ENG</span>
<span style="left:1258px;top:3px;font-size:11.6px;line-height:16px;color:#fff;white-space:nowrap" id="tm">8:18 AM</span>
<span style="left:1253px;top:21px;font-size:11.4px;line-height:16px;color:#fff;white-space:nowrap" id="dt">12/22/2025</span>
<div style="left:1361px;top:0;width:1px;height:40px;background:#5a6670"></div>
<svg style="left:0;top:0" width="1366" height="40" viewBox="0 728 1366 40" fill="none">
<defs>
<linearGradient id="nsky" x1="0" y1="0" x2="0" y2="1"><stop offset="0" stop-color="#25256a"/><stop offset="0.200" stop-color="#4a4692"/><stop offset="0.400" stop-color="#8c80bc"/><stop offset="0.600" stop-color="#a99ccc"/><stop offset="1" stop-color="#a99ccc"/></linearGradient>
<linearGradient id="edgeg" x1="0" y1="0" x2="1" y2="0.350"><stop offset="0" stop-color="#2fb4f2"/><stop offset="0.450" stop-color="#33c3d0"/><stop offset="0.750" stop-color="#4fd890"/><stop offset="1" stop-color="#72ea48"/></linearGradient><linearGradient id="edgeb" x1="0" y1="0" x2="0.300" y2="1"><stop offset="0" stop-color="#1d96e4"/><stop offset="1" stop-color="#0c74d4"/></linearGradient>
<radialGradient id="sun" cx="0.35" cy="0.3" r="0.8"><stop offset="0" stop-color="#ffc728"/><stop offset="1" stop-color="#f2871a"/></radialGradient>
</defs>
<!-- start -->
<path d="M15.700 742.200 L22.600 741.200 V747.500 H15.700 Z M23.500 741.100 L32.400 739.800 V747.500 H23.500 Z M15.700 748.400 H22.600 V754.700 L15.700 753.700 Z M23.500 748.400 H32.400 V756.100 L23.500 754.800 Z" fill="#fff"/>
<!-- search icon -->
<circle cx="70.400" cy="746" r="5" stroke="#222" stroke-width="1.300"/><path d="M66.800 749.600 L60.400 755.200" stroke="#222" stroke-width="1.300"/>
<!-- snowy village image -->
<g>
<clipPath id="blob"><path d="M258 768 Q257 756 260.500 747 Q262 738 268 733.500 Q276 731.500 284 730.800 Q296 728.600 306 730.600 Q316 732.400 322 732.600 Q328 735 330.500 744 Q333.500 752 333.500 768 Z"/></clipPath>
<g clip-path="url(#blob)">
<rect x="256" y="728" width="80" height="40" fill="url(#nsky)"/>
<ellipse cx="308" cy="743" rx="16" ry="7" fill="#c9a4d4" opacity="0.750"/>
<ellipse cx="262" cy="744" rx="7" ry="14" fill="#262a6c" opacity="0.600"/><ellipse cx="331" cy="744" rx="6" ry="14" fill="#262a6c" opacity="0.600"/>
<path d="M262 748 L268 743 L275.700 737.200 L279.500 739.800 L283.600 738.200 L290 742.400 L298.700 740.200 L306 743.600 L312 744.600 L319.200 742.500 L324 746 L332 750 V754 H260 Z" fill="#c3cde6"/>
<path d="M272 740 L275.700 737.200 L279.500 739.800 L283.600 738.200 L288 741 L282 741.600 L278 743 Z M294 741.400 L298.700 740.200 L304 742.600 L298 743.200 Z M315.500 743.600 L319.200 742.500 L322 744.400 Z" fill="#fff"/>
<path d="M262 750 L266 745.500 L270 744 L274 746 L276 743.500 L280 744 L284 742.800 L288 745.500 L292 746 L296 748.400 L300 746.600 L304 748.600 L308 747 L312 749 L318 747.400 L324 748.400 L332 752 V758 H260 Z" fill="#46568c"/>
<path d="M258 752 Q268 745 280 748.500 Q290 752 296 755 L334 752 V768 H258 Z" fill="#3b4a92"/>
<path d="M296 752 Q312 748 334 753 V760 H296 Z" fill="#1d2a66"/>
<path d="M274 752 H320 V764 H274 Z" fill="#1e2458"/>
<g fill="#f1d9b8"><path d="M278 758 L284 754.500 L288 758 V762 H278 Z"/><path d="M287 753.500 L291 751.400 L294 753.500 V756.500 H287 Z"/><path d="M296 751.500 L299 750 L301.500 751.500 V754 H296 Z"/><path d="M299 755 L304 752.500 L306.500 755 V758 H299 Z"/><path d="M304 760 L310 756 L315 760 V763.500 H304 Z"/><path d="M287 762 L295 757.500 L301 762 V767 H287 Z"/></g>
<g fill="#fff"><path d="M277.400 758.400 L283 754.400 L288.600 757.400 L284 758 Z"/><path d="M286.600 753.800 L290.600 751.200 L294.400 753.200 L291 754 Z"/><path d="M295.600 751.800 L298.600 749.800 L301.800 751.400 Z"/><path d="M298.600 755.400 L303.600 752.200 L307 755 L303 755.400 Z"/><path d="M303.400 760.400 L310 755.600 L315.600 760.200 L310 758.400 Z"/><path d="M286.400 762.400 L295 757 L301.600 762 L296 760 Z"/></g>
<path d="M256 756 Q262 752 268 755 Q278 760 290 765 Q296 767 302 764 Q314 757 324 757 Q330 756 335 758 V768 H256 Z" fill="#5b7ac8"/>
<path d="M256 762 Q270 758 290 766 Q296 768 304 765 Q320 759 335 762 V768 H256 Z" fill="#4063b4"/>
<g fill="#f7c446"><circle cx="276" cy="756" r="1.300"/><circle cx="295.500" cy="754.700" r="1.200"/><circle cx="317.200" cy="759.300" r="1.400"/><circle cx="308.300" cy="753.300" r="1"/><circle cx="286.200" cy="752.700" r="1"/></g>
<g fill="#d6d4f2"><circle cx="288.500" cy="736.500" r="0.900"/><circle cx="266.800" cy="739.800" r="0.900"/><circle cx="312.300" cy="739.800" r="0.900"/><circle cx="324.800" cy="743.300" r="0.900"/></g>
</g>
</g>
<!-- task view -->
<g stroke="#fff" stroke-width="1.200" stroke-linejoin="miter"><rect x="352.400" y="744.800" width="10.100" height="5.600"/><path d="M352.400 740 V742.400 H362.500 V740 M352.400 755.100 V752.600 H362.500 V755.100"/><path d="M366.500 740 V742.900 M366.500 748 V755.100" stroke-width="1.400"/></g><rect x="365" y="744" width="3" height="2.900" fill="#fff"/>
<!-- folder -->
<path d="M400 739.500 Q400 738.600 401 738.600 H408 L410 740.800 H421 Q421.900 740.800 421.900 741.800 V756 H400 Z" fill="#f0b429"/>
<path d="M400 743.400 H421.900 V755.800 Q421.900 756.800 421 756.800 H401 Q400 756.800 400 755.800 Z" fill="#ffd75a"/>
<path d="M405 756.800 V750.500 H417 V756.800 H414 V753.500 H408 V756.800 Z" fill="#3d8fd6"/>
<!-- edge -->
<circle cx="460" cy="747.800" r="12.100" fill="url(#edgeb)"/>
<path d="M455.600 745.600 C452.600 751.500 455.500 758 462 758.800 C466.500 759.200 470 756.600 470.600 753.600 C466 755.800 460.600 754.600 458.700 751.400 C457.600 749.600 457 747.400 457.600 745.600 Z" fill="#0d55a6"/>
<path d="M447.950 746.500 C448.300 739.800 454 735.700 460 735.700 C466.500 735.700 472.100 741 472.100 747.600 C472.100 750 470.600 752 468 752.600 C465.400 753.200 462.400 752.400 461 750.800 C462.200 750 462.800 748.600 462.400 747.200 C461.600 744.200 457.600 742.400 453.800 742.800 C451.200 743 449 744.400 447.950 746.500 Z" fill="url(#edgeg)"/>
<path d="M457.600 747.200 C457.800 744.600 461.200 744.200 462.300 746.600 C462.900 748.200 462.300 749.800 461 750.800 C462.600 752.600 466 753.400 470.800 752 L470.600 753.600 C466 755.800 460.600 754.600 458.700 751.400 C457.800 750 457.400 748.600 457.600 747.200 Z" fill="#213942"/>
<!-- excel -->
<rect x="507" y="739.500" width="13" height="17.500" rx="1" fill="#fff"/><g stroke="#1e7145" stroke-width="1"><path d="M510 742.500 H518.500 M510 745.500 H518.500 M510 748.500 H518.500 M510 751.500 H518.500 M510 754.500 H518.500 M514.500 741 V756"/></g>
<path d="M497.400 739.400 L511 737 V759 L497.400 756.600 Z" fill="#1e7145"/>
<path d="M500.600 743.600 L507.400 752.400 M507.400 743.600 L500.600 752.400" stroke="#fff" stroke-width="1.700"/>
<!-- word -->
<rect x="556" y="739.500" width="13.500" height="17.500" rx="1" fill="#fff"/><g stroke="#2b579a" stroke-width="1"><path d="M560 742.500 H568 M560 745.500 H568 M560 748.500 H568 M560 751.500 H568 M560 754.500 H568"/></g>
<path d="M546.500 739.400 L560 737 V759 L546.500 756.600 Z" fill="#2b579a"/>
<path d="M549 744 L550.800 752 L553.200 745.500 L555.600 752 L557.400 744" stroke="#fff" stroke-width="1.400" stroke-linejoin="round"/>
<!-- chrome -->
<circle cx="607" cy="748" r="12" fill="#fff"/>
<path d="M607 748 L596.600 742 A12 12 0 0 1 617.400 742 Z" fill="#ea4335"/>
<path d="M607 748 L617.400 742 A12 12 0 0 1 607 760 Z" fill="#fbbc05"/>
<path d="M607 748 L607 760 A12 12 0 0 1 596.600 742 Z" fill="#34a853"/>
<circle cx="607" cy="748" r="5.600" fill="#fff"/><circle cx="607" cy="748" r="4.400" fill="#4285f4"/>
<!-- vlc -->
<path d="M653.800 738 Q655.800 736 657.800 738 L663.500 754 H648 Z" fill="#f48b00"/>
<path d="M652.400 742.200 H659.200 L660.400 745.600 H651.200 Z M650 749 H661.600 L662.800 752.400 H648.800 Z" fill="#f4f4f4"/>
<path d="M646.200 754.400 H665.400 L665.800 758 Q665.800 759 664.800 759 H647 Q646 759 646 758 Z" fill="#f48b00"/>
<!-- whatsapp -->
<path d="M692.500 760 L694.400 753.400 A12 12 0 1 1 699 757.800 Z" fill="#25d366"/>
<path d="M695.600 756.800 L696.800 752.800 A9.400 9.400 0 1 1 700 755.800 Z" fill="#1d323d"/>
<path d="M700.400 742.800 Q701.600 741.600 702.400 743 L703.400 745.200 Q703.600 746 702.600 746.800 Q703.600 749.600 706.600 751 Q707.600 750 708.400 750.400 L710.400 751.600 Q711 752.400 710 753.600 Q708 755.200 704.600 753.400 Q700.400 750.800 699.600 746.400 Q699.400 744 700.400 742.800 Z" fill="#25d366"/>
<rect x="707.800" y="747.400" width="19.600" height="15" rx="7.500" fill="#2a2f33" stroke="#d8d8d8" stroke-width="1"/>
<text x="717.600" y="759.200" font-family="Liberation Sans,sans-serif" font-size="10.500" font-weight="bold" fill="#fff" text-anchor="middle">37</text>
<!-- shield -->
<path d="M754 739.300 Q758 741.400 762.800 741.600 V747 Q762.400 752.600 754 755.800 Q745.600 752.600 745.200 747 V741.600 Q750 741.400 754 739.300 Z" fill="#fff"/>
<path d="M754 739.300 V755.800 M745.200 747.200 H762.800" stroke="#1c313a" stroke-width="1.300"/>
<!-- sketchup -->
<g stroke="#1f7fd0" stroke-width="2.300" stroke-linejoin="miter" fill="none">
<path d="M795 741.800 L803 737.400 L813 742.600 V752 L804.600 758.400"/>
<path d="M799.400 743.600 L803 741.600 L808.800 744.800 V750 L804.800 753"/>
<path d="M793.200 744.800 L802.400 749.400 V759.400"/>
<path d="M793.600 749.600 L800 752.800"/>
<path d="M793.600 753.800 L800 757"/>
</g>
<!-- weather -->
<circle cx="931" cy="747.800" r="10" fill="url(#sun)"/>
<path d="M930.600 753.400 Q928.400 753.200 928.600 751.200 Q929 749.600 930.800 749.800 Q931.600 747.400 934.400 747.600 Q936.800 747.800 937.400 750 Q939.400 749 941 750.200 Q942.600 750 943.200 751.600 Q943.400 753.200 941.600 753.400 Z" fill="#c8dcf4"/>
<path d="M930.600 753.400 Q928.400 753.200 928.600 751.200 H943.200 Q943.400 753.200 941.600 753.400 Z" fill="#9ebfe8"/>
<circle cx="937.200" cy="741.800" r="5" fill="#d92b2b"/>
<text x="937.200" y="745" font-family="Liberation Sans,sans-serif" font-size="8.500" font-weight="bold" fill="#fff" text-anchor="middle">1</text>
<!-- tray icons -->
<g stroke="#fff" stroke-width="1.200" fill="none">
<path d="M1099.300 750.800 L1105 745.100 L1110.700 750.800"/>
<rect x="1124.400" y="745.400" width="7.400" height="5.800" rx="1.400" stroke-width="1.100"/><path d="M1131.800 747.300 L1134.500 745.600 V751 L1131.800 749.300" stroke-width="1.100"/><path d="M1124.800 742.400 Q1128.700 738.800 1132.700 742.400 M1124.800 754.200 Q1128.700 757.800 1132.700 754.200" stroke-width="1"/>
<rect x="1149.500" y="744.500" width="10" height="8" stroke-width="1"/><path d="M1160.600 746.800 V750.200" stroke-width="1.200"/><path d="M1151.800 746.200 H1158.400 V750.800 H1151 Z" fill="#fff" stroke="none"/>
<path d="M1146.500 742.400 V745 M1148.700 742.400 V745 M1147.600 748 V752.400 H1149" stroke-width="0.900"/><path d="M1145.500 745 H1149.600 V746.400 Q1149.400 748 1147.600 748 Q1145.700 748 1145.500 746.400 Z" fill="#fff" stroke="none"/>
<path d="M1172.600 754.800 A11.500 11.500 0 0 1 1183.800 743.400" stroke="#9aa3ad" stroke-width="1.100"/>
<path d="M1175.800 754.800 A8.200 8.200 0 0 1 1183.800 746.800" stroke="#c5cbd2" stroke-width="1.100"/>
<path d="M1179 754.800 A5 5 0 0 1 1183.800 750" stroke="#fff" stroke-width="1.200"/>
<circle cx="1182.600" cy="753.800" r="1.500" fill="#fff" stroke="none"/>
<path d="M1193 745.800 H1195.800 L1199.400 742.400 V753.600 L1195.800 750.200 H1193 Z" stroke-width="1.100"/>
<path d="M1201.600 745.600 Q1203.200 748 1201.600 750.400 M1204 743.600 Q1206.600 748 1204 752.400 M1206.400 741.600 Q1210.200 748 1206.400 754.400" stroke-width="1.100"/>
<path d="M1325.400 740.900 H1340.600 V751.900 H1336 L1333 754.900 L1330 751.900 H1325.400 Z" stroke-width="1.200"/>
</g>
</svg>
</div>
</body></html>
